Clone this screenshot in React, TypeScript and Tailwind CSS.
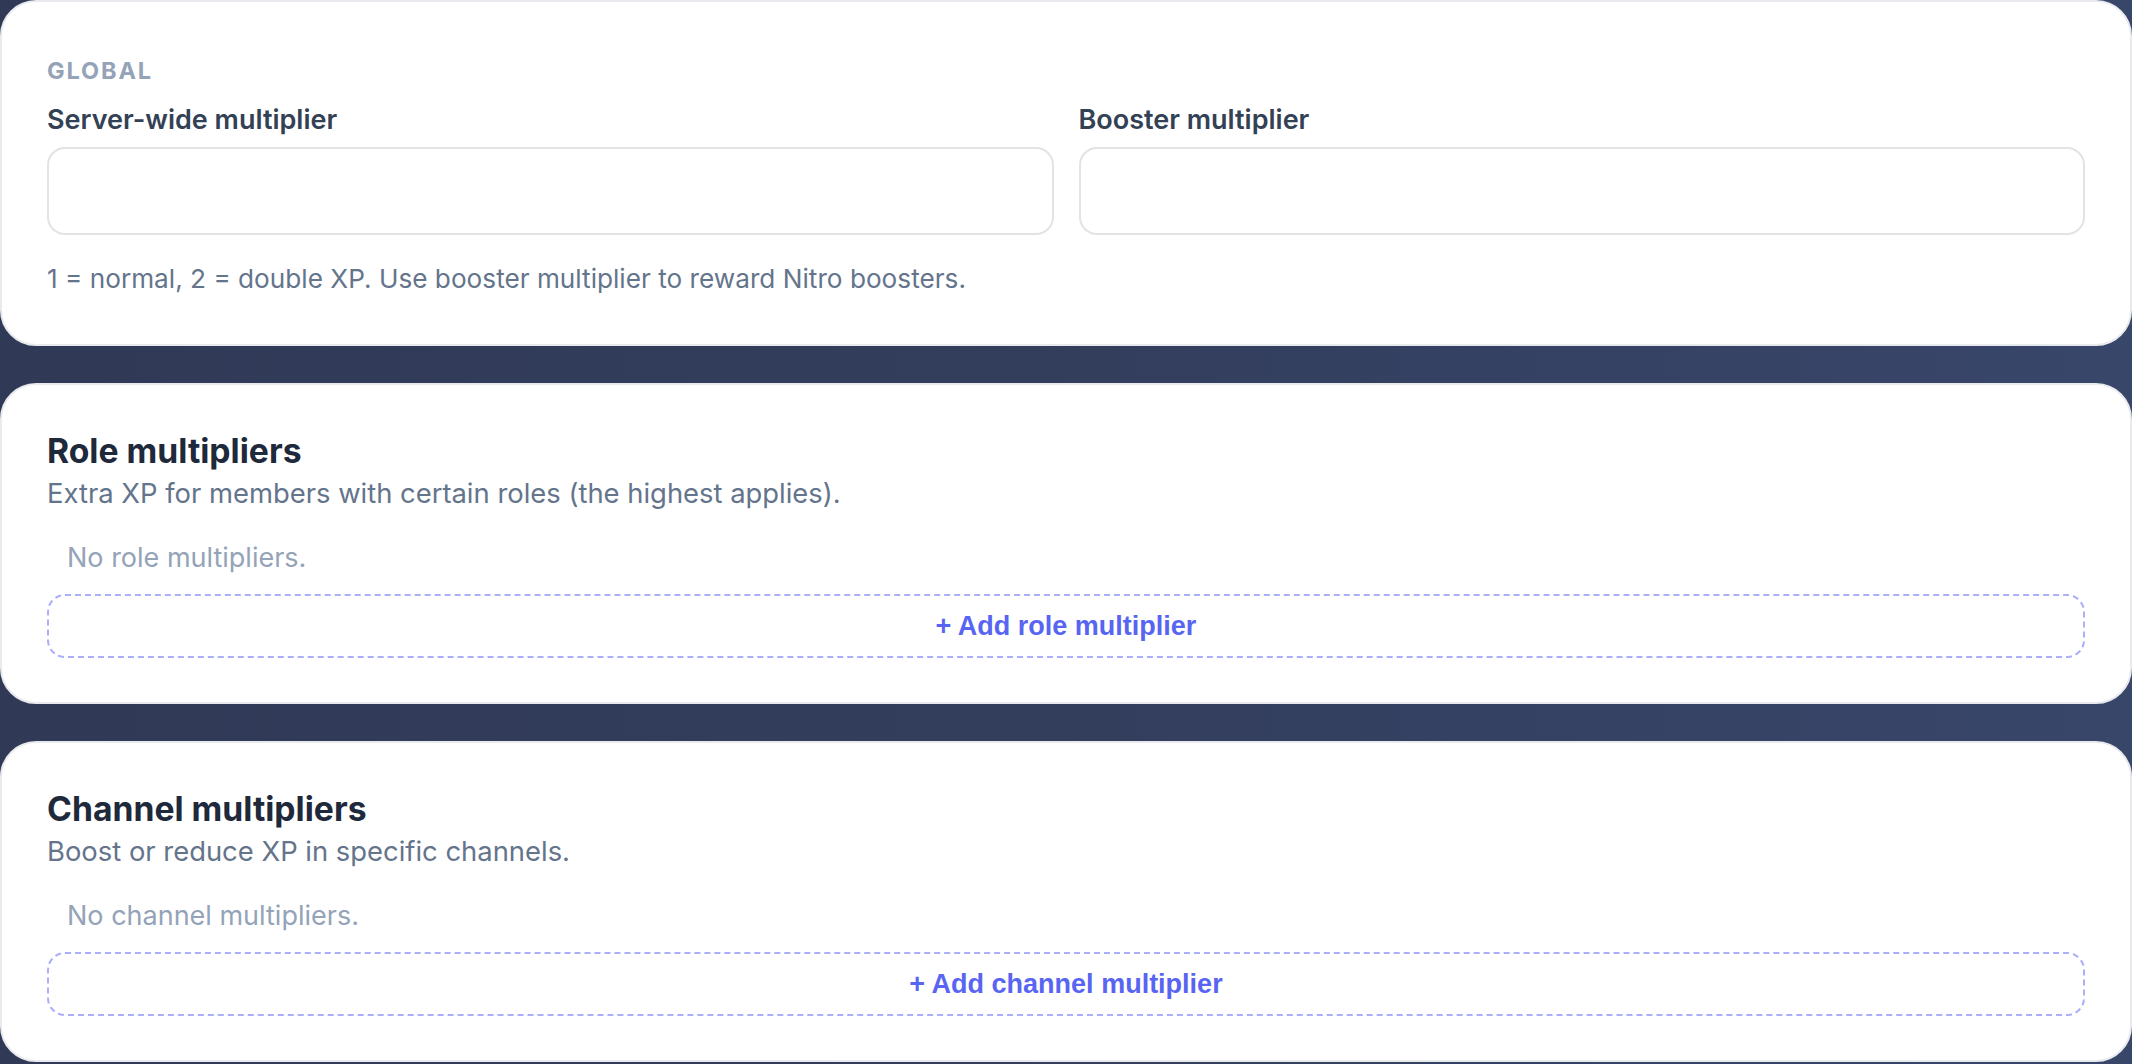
import { useState } from "react";

const FONT = "font-['Inter','Noto_Sans',sans-serif]";

type Multiplier = { id: string; value: string };

function EmptyList({ items, emptyText, addLabel, onAdd }: { items: Multiplier[]; emptyText: string; addLabel: string; onAdd: () => void }) {
  return (
    <>
      {items.length === 0 ? (
        <p className="mt-[25px] pl-[20px] text-[27px] leading-[40px] text-[#94a3b8]">{emptyText}</p>
      ) : (
        <ul className="mt-[25px] space-y-2">
          {items.map((m) => (
            <li key={m.id} className="text-[27px] leading-[40px] text-[#334155]">
              {m.value}
            </li>
          ))}
        </ul>
      )}
      <button
        onClick={onAdd}
        className="mt-[16px] flex h-[64px] w-full items-center justify-center rounded-[18px] border-2 border-dashed border-[#abaefa] bg-white font-['Liberation_Sans',Arial,sans-serif] text-[27px] font-bold text-[#5865f2] hover:bg-[#f5f6ff]"
      >
        {addLabel}
      </button>
    </>
  );
}

export default function App() {
  const [serverMult, setServerMult] = useState("");
  const [boosterMult, setBoosterMult] = useState("");
  const [roles, setRoles] = useState<Multiplier[]>([]);
  const [channels, setChannels] = useState<Multiplier[]>([]);

  return (
    <div className={`${FONT} min-h-screen bg-gradient-to-r from-[#303a57] via-[#333e5d] to-[#38466a]`}>
      <div className="flex flex-col gap-[37px] pb-[4px]">
        {/* global */}
        <section className="rounded-[36px] border-2 border-[#e9eaee] bg-white px-[45px] pb-[45px] pt-[52px]">
          <h3 className="text-[23.5px] font-bold uppercase leading-[34px] tracking-[0.08em] text-[#94a3b8]">Global</h3>
          <div className="mt-[12px] grid grid-cols-2 gap-[25px]">
            <label className="block">
              <span className="block text-[27px] font-semibold leading-[40px] text-[#334155]">Server-wide multiplier</span>
              <input
                type="number"
                value={serverMult}
                onChange={(e) => setServerMult(e.target.value)}
                className="mt-[7px] h-[88px] w-full rounded-[18px] border-2 border-[#e3e3e5] bg-white px-6 text-[27px] text-[#1e293b] outline-none"
              />
            </label>
            <label className="block">
              <span className="block text-[27px] font-semibold leading-[40px] text-[#334155]">Booster multiplier</span>
              <input
                type="number"
                value={boosterMult}
                onChange={(e) => setBoosterMult(e.target.value)}
                className="mt-[7px] h-[88px] w-full rounded-[18px] border-2 border-[#e3e3e5] bg-white px-6 text-[27px] text-[#1e293b] outline-none"
              />
            </label>
          </div>
          <p className="mt-[24px] text-[26.2px] leading-[40px] text-[#64748b]">
            1 = normal, 2 = double XP. Use booster multiplier to reward Nitro boosters.
          </p>
        </section>

        {/* roles */}
        <section className="rounded-[36px] border-2 border-[#e9eaee] bg-white px-[45px] pb-[44px] pt-[44px]">
          <h2 className="text-[33.7px] font-bold leading-[44px] text-[#1e293b]">Role multipliers</h2>
          <p className="text-[27.4px] leading-[40px] text-[#64748b]">Extra XP for members with certain roles (the highest applies).</p>
          <EmptyList
            items={roles}
            emptyText="No role multipliers."
            addLabel="+ Add role multiplier"
            onAdd={() => setRoles((r) => r)}
          />
        </section>

        {/* channels */}
        <section className="rounded-[36px] border-2 border-[#e9eaee] bg-white px-[45px] pb-[44px] pt-[44px]">
          <h2 className="text-[33.7px] font-bold leading-[44px] text-[#1e293b]">Channel multipliers</h2>
          <p className="text-[27.4px] leading-[40px] text-[#64748b]">Boost or reduce XP in specific channels.</p>
          <EmptyList
            items={channels}
            emptyText="No channel multipliers."
            addLabel="+ Add channel multiplier"
            onAdd={() => setChannels((c) => c)}
          />
        </section>
      </div>
    </div>
  );
}
